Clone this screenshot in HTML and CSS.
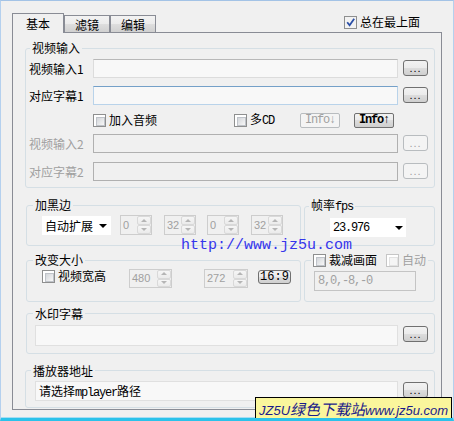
FILE: index.html
```html
<!DOCTYPE html>
<html lang="zh-CN">
<head>
  <meta charset="UTF-8">
  <title>设置</title>
  <link rel="stylesheet" href="styles.css">
</head>
<body>

<div class="window">
  <div class="topbar">
    <div class="tabs">
      <div class="tab active">基本</div>
      <div class="tab">滤镜</div>
      <div class="tab">编辑</div>
    </div>
    <span class="chk top-chk"><i class="box checked"><svg width="11" height="11" viewBox="0 0 11 11"><path d="M2.2 5.2 L4.6 8.2 L9.2 1.8" fill="none" stroke="#2b4fa6" stroke-width="1.8"/></svg></i>总在最上面</span>
  </div>

  <div class="panel">
    <!-- 视频输入 -->
    <fieldset class="group g-video">
      <legend>视频输入</legend>
      <div class="body">
        <div class="row">
          <span class="lbl">视频输入1</span>
          <div class="input"></div>
          <div class="btn dots">...</div>
        </div>
        <div class="row r2">
          <span class="lbl">对应字幕1</span>
          <div class="input focus"></div>
          <div class="btn dots">...</div>
        </div>
        <div class="check-row">
          <span class="chk opt-audio"><i class="box"></i>加入音频</span>
          <span class="chk opt-cd"><i class="box"></i><span>多<span class="mono">CD</span></span></span>
          <div class="btn info disabled mono">Info↓</div>
          <div class="btn info mono bold">Info↑</div>
        </div>
        <div class="row r4 disabled">
          <span class="lbl">视频输入2</span>
          <div class="input"></div>
          <div class="btn dots">...</div>
        </div>
        <div class="row r5 disabled">
          <span class="lbl">对应字幕2</span>
          <div class="input"></div>
          <div class="btn dots">...</div>
        </div>
      </div>
    </fieldset>

    <div class="g-row row-a">
      <fieldset class="group g-black">
        <legend>加黑边</legend>
        <div class="body">
          <div class="combo"><span>自动扩展</span><i class="caret"></i></div>
          <div class="spin s1"><span class="val">0</span><span class="arrows"><i class="up"></i><i class="down"></i></span></div>
          <div class="spin s2"><span class="val">32</span><span class="arrows"><i class="up"></i><i class="down"></i></span></div>
          <div class="spin s3"><span class="val">0</span><span class="arrows"><i class="up"></i><i class="down"></i></span></div>
          <div class="spin s2"><span class="val">32</span><span class="arrows"><i class="up"></i><i class="down"></i></span></div>
        </div>
      </fieldset>
      <fieldset class="group g-fps">
        <legend>帧率<span class="mono">fps</span></legend>
        <div class="body">
          <div class="combo wide"><span class="mono">23.976</span><i class="caret"></i></div>
        </div>
      </fieldset>
    </div>

    <div class="g-row row-b">
      <fieldset class="group g-size">
        <legend>改变大小</legend>
        <div class="body">
          <span class="chk opt-wh"><i class="box"></i>视频宽高</span>
          <div class="spin w480"><span class="val">480</span><span class="arrows"><i class="up"></i><i class="down"></i></span></div>
          <div class="spin w272"><span class="val">272</span><span class="arrows"><i class="up"></i><i class="down"></i></span></div>
          <div class="btn ratio mono">16:9</div>
        </div>
      </fieldset>
      <fieldset class="group g-crop">
        <legend><span class="chk"><i class="box"></i>裁减画面</span><span class="chk auto"><i class="box off"></i>自动</span></legend>
        <div class="body">
          <div class="input crop mono">8,0,-8,-0</div>
        </div>
      </fieldset>
    </div>

    <fieldset class="group g-mark">
      <legend>水印字幕</legend>
      <div class="body">
        <div class="input long tall"></div>
        <div class="btn dots">...</div>
      </div>
    </fieldset>

    <fieldset class="group g-player">
      <legend>播放器地址</legend>
      <div class="body">
        <div class="input long">请选择<span class="mono">mplayer</span>路径</div>
        <div class="btn dots">...</div>
      </div>
    </fieldset>
  </div>

  <div class="url">http://www.jz5u.com</div>
  <div class="stamp"><span class="lat">JZ5U</span><span class="cjk">绿色下载站</span><span class="lat">www.jz5u.com</span></div>
</div>

</body>
</html>
```

FILE: styles.css
```css
* {
  box-sizing: border-box;
}

body {
  margin: 0;
  background: #f0f0f0;
  color: #000;
  font-family: "Noto Sans CJK SC", "Liberation Sans", sans-serif;
  font-size: 12px;
  line-height: 14px;
}

.window {
  position: relative;
  width: 454px;
  height: 421px;
  overflow: hidden;
  padding: 12px 0 0 11px;
  border-top: 1px solid #a3c3e6;
  border-left: 1px solid #b4d0ee;
  border-right: 1px solid #b4d0ee;
  border-bottom: 3px solid #2bc2ea;
  box-shadow: inset 0 -1px #a6ddf2;
}

.mono {
  font-family: "Liberation Mono", "Noto Sans CJK SC", monospace;
  letter-spacing: -1.2px;
}

.bold {
  font-weight: bold;
}

/* tabs */
.topbar {
  display: flex;
  width: 431px;
  height: 19px;
}

.tabs {
  display: flex;
  align-items: flex-end;
  height: 19px;
}

.tab {
  width: 46px;
  height: 17px;
  border: 1px solid #898c95;
  border-bottom: 0;
  text-align: center;
  line-height: 17px;
  background: linear-gradient(#f3f3f3, #ebebeb 50%, #dedede 50%, #d0d0d0);
}

.tab.active {
  position: relative;
  z-index: 1;
  width: 52px;
  height: 20px;
  margin-bottom: -1px;
  line-height: 19px;
  background: #f0f0f0;
}

.top-chk {
  align-self: flex-start;
  margin: 2px 23px 0 auto;
}

.panel {
  width: 430px;
  height: 378px;
  border: 1px solid #898c95;
  padding: 8px 0 0 12px;
}

/* checkbox */
.chk {
  display: inline-flex;
  align-items: center;
  gap: 3px;
  height: 14px;
}

.box {
  display: inline-block;
  flex: none;
  width: 13px;
  height: 13px;
  padding: 2px;
  border: 1px solid #8e8f8f;
  background: #fff;
}

.box::before {
  content: '';
  display: block;
  width: 7px;
  height: 7px;
  border: 1px solid #bfc3c9;
  background: linear-gradient(135deg, #d3d6da, #f7f7f7);
}

.box.checked {
  padding: 0;
  background: #f2f2f2;
}

.box.checked::before {
  display: none;
}

.box.checked svg {
  display: block;
}

.box.off {
  border-color: #c6c6c6;
}

.box.off::before {
  border-color: #e2e2e2;
  background: #f5f5f5;
}

/* group boxes */
.group {
  margin: 0;
  padding: 0;
  min-width: 0;
  border: 1px solid #d5dfe5;
  border-radius: 3px;
}

.group legend {
  padding: 0 2px;
  margin-left: 5px;
  line-height: 14px;
}

.g-video {
  width: 410px;
}

.g-video legend {
  margin-left: 4px;
}

.g-video .body {
  padding: 4px 0 6px 3px;
}

.row {
  display: flex;
  align-items: flex-start;
  height: 19px;
}

.r2 {
  margin-top: 8px;
}

.r4 {
  margin-top: 7px;
}

.r5 {
  margin-top: 9px;
}

.lbl {
  width: 64px;
  line-height: 19px;
}

.disabled .lbl {
  color: #a0a0a0;
}

.input {
  width: 305px;
  height: 19px;
  padding-left: 3px;
  line-height: 17px;
  background: #f8f8f8;
  border: 1px solid #dcdcdc;
  border-top-color: #b8b8b8;
}

.input.focus {
  border-color: #b9d3ea;
  border-top-color: #74a0c8;
}

.disabled .input {
  background: #f0f0f0;
  border-color: #b0b0b0;
}

.btn {
  border: 1px solid #707070;
  border-radius: 3px;
  text-align: center;
  background: linear-gradient(#f2f2f2, #ebebeb 50%, #dddddd 50%, #cfcfcf);
}

.dots {
  width: 25px;
  height: 16px;
  margin: 1px 0 0 5px;
  font: 11px/15px "Liberation Sans", sans-serif;
  letter-spacing: 1px;
}

.disabled .dots,
.btn.disabled {
  border-color: #b8bcbf;
  background: #f4f4f4;
  color: #a0a0a0;
}

.check-row {
  display: flex;
  align-items: center;
  height: 14px;
  margin-top: 8px;
  padding-left: 64px;
}

.opt-audio {
  width: 141px;
}

.opt-cd {
  width: 66px;
}

.info {
  width: 40px;
  height: 15px;
  margin-right: 14px;
  border-radius: 2px;
  line-height: 13px;
  font-size: 12px;
}

/* second and third rows of groups */
.g-row {
  display: flex;
  gap: 3px;
  margin-left: 1px;
}

.row-a {
  margin-top: 10px;
}

.row-b {
  margin-top: 7px;
}

.g-black,
.g-size {
  width: 275px;
}

.g-black legend,
.g-size legend {
  margin-left: 6px;
}

.g-fps,
.g-crop {
  width: 131px;
}

.g-fps legend {
  margin-left: 4px;
}

.g-black .body {
  display: flex;
  align-items: flex-start;
  padding: 3px 0 8px 15px;
}

.g-fps .body {
  padding: 4px 0 8px 25px;
}

.combo {
  display: flex;
  align-items: center;
  justify-content: space-between;
  width: 69px;
  height: 19px;
  margin-top: 1px;
  padding: 0 4px 0 3px;
  background: #fff;
}

.combo.wide {
  width: 76px;
  margin-top: 0;
  padding-right: 3px;
}

.caret {
  width: 0;
  height: 0;
  border-left: 4px solid transparent;
  border-right: 4px solid transparent;
  border-top: 4px solid #000;
}

.spin {
  display: flex;
  width: 32px;
  height: 20px;
  margin-left: 12px;
  border: 1px solid #cdcdcd;
  background: #f0f0f0;
}

.spin.s1 {
  margin-left: 9px;
}

.spin.s3 {
  margin-left: 11px;
}

.spin .val {
  flex: 1;
  padding-left: 2px;
  color: #a0a0a0;
  font: 11px/18px "Liberation Sans", sans-serif;
}

.spin .arrows {
  display: flex;
  flex-direction: column;
  width: 14px;
}

.spin .arrows i {
  position: relative;
  flex: 1;
  border: 1px solid #d9d9d9;
  border-radius: 2px;
  background: linear-gradient(#f6f6f6, #ebebeb);
}

.spin .arrows i::after {
  content: '';
  position: absolute;
  left: 50%;
  top: 50%;
  margin: -2px 0 0 -3px;
  border-left: 3px solid transparent;
  border-right: 3px solid transparent;
}

.spin .arrows .up::after {
  border-bottom: 3px solid #b5b5b5;
}

.spin .arrows .down::after {
  border-top: 3px solid #b5b5b5;
}

.g-size .body {
  display: flex;
  align-items: flex-start;
  padding: 2px 0 11px 15px;
}

.opt-wh {
  width: 87px;
}

.spin.w480 {
  width: 43px;
  height: 19px;
  margin-left: 0;
}

.spin.w272 {
  width: 44px;
  height: 19px;
  margin-left: 32px;
}

.spin.w480 .val,
.spin.w272 .val {
  line-height: 17px;
}

.ratio {
  width: 33px;
  height: 14px;
  margin: 1px 0 0 10px;
  line-height: 12px;
  letter-spacing: 0;
}

.g-crop legend {
  margin-left: 6px;
}

.g-crop .auto {
  margin-left: 9px;
  color: #a0a0a0;
}

.g-crop .body {
  padding: 2px 0 10px 9px;
}

.input.crop {
  width: 102px;
  height: 20px;
  line-height: 18px;
  color: #a0a0a0;
  background: #f0f0f0;
  border-color: #c4c4c4;
}

.g-mark {
  width: 409px;
  margin-top: 5px;
  margin-left: 1px;
}

.g-mark legend {
  margin-left: 6px;
}

.g-mark .body,
.g-player .body {
  display: flex;
  align-items: flex-start;
}

.g-mark .body {
  padding: 4px 0 7px 8px;
}

.g-player {
  width: 410px;
  margin-top: 10px;
}

.g-player .body {
  padding: 3px 0 6px 9px;
}

.input.long {
  width: 363px;
  height: 20px;
  line-height: 18px;
  border-color: #e0e0e0;
}

.input.tall {
  height: 21px;
}

/* overlays */
.url {
  position: absolute;
  left: 180px;
  top: 237px;
  color: #3535ec;
  font: 15px/16px "Liberation Mono", monospace;
}

.stamp {
  position: absolute;
  left: 254px;
  top: 396px;
  width: 197px;
  height: 23px;
  padding-left: 3px;
  border: 1px solid #000;
  background: #faf69c;
  color: #1b1b8a;
  font-style: italic;
  line-height: 21px;
  white-space: nowrap;
}

.stamp .lat {
  font-family: "Liberation Sans", sans-serif;
  font-size: 13px;
}

.stamp .cjk {
  font-size: 15px;
}
```
